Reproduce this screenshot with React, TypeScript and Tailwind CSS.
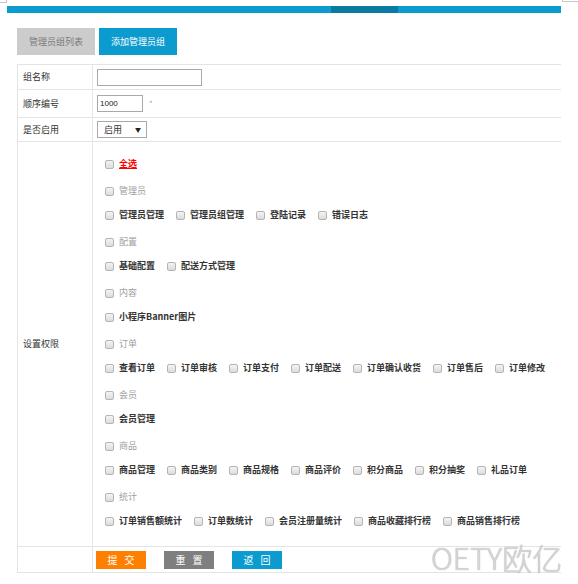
const groups = [
  { title: "管理员", items: ["管理员管理", "管理员组管理", "登陆记录", "错误日志"] },
  { title: "配置", items: ["基础配置", "配送方式管理"] },
  { title: "内容", items: ["小程序Banner图片"] },
  {
    title: "订单",
    items: ["查看订单", "订单审核", "订单支付", "订单配送", "订单确认收货", "订单售后", "订单修改"],
  },
  { title: "会员", items: ["会员管理"] },
  {
    title: "商品",
    items: ["商品管理", "商品类别", "商品规格", "商品评价", "积分商品", "积分抽奖", "礼品订单"],
  },
  {
    title: "统计",
    items: ["订单销售额统计", "订单数统计", "会员注册量统计", "商品收藏排行榜", "商品销售排行榜"],
  },
];

function Box() {
  return (
    <span className="w-[9px] h-[9px] shrink-0 rounded-[2px] border border-[#b4b4b4] bg-gradient-to-b from-[#f4f4f4] to-[#dcdcdc]" />
  );
}

function Check({ label, className }: { label: string; className?: string }) {
  return (
    <span className="flex items-center gap-[5px]">
      <Box />
      <span className={className}>{label}</span>
    </span>
  );
}

export default function App() {
  return (
    <div className="relative w-[578px] h-[584px] bg-white font-['Noto_Sans_CJK_SC',sans-serif] text-[9px] text-[#333]">
      {/* corner marks */}
      <div className="absolute left-0 top-0 w-[7px] h-[3px] border-r border-b border-[#c8c8c8]" />
      <div className="absolute right-0 top-0 w-[16px] h-[2px] border-l border-b border-[#c8c8c8]" />

      {/* top bar */}
      <div className="pt-[6px] pl-[7px]">
        <div className="flex w-[554px] h-[7px] bg-[#0b9bcf]">
          <div className="ml-[324px] w-[67px] bg-[#0a7aa2]" />
        </div>
      </div>

      <div className="pl-[17px]">
        {/* tabs */}
        <div className="mt-[15px] flex gap-[4px]">
          <div className="w-[78px] h-[27px] flex items-center justify-center bg-[#cccccc] text-[#7a7a7a]">
            管理员组列表
          </div>
          <div className="w-[78px] h-[27px] flex items-center justify-center bg-[#0b9bcf] text-white">
            添加管理员组
          </div>
        </div>

        {/* form table */}
        <div className="mt-[9px] w-[544px] border-l border-b border-[#e4e4e4]">
          <div className="flex h-[25px] border-t border-[#e4e4e4]">
            <div className="w-[75px] shrink-0 border-r border-[#e4e4e4] flex items-center pl-[5px]">组名称</div>
            <div className="flex items-center pl-[4px]">
              <span className="w-[105px] h-[17px] border border-[#a9a9a9] bg-white" />
            </div>
          </div>
          <div className="flex h-[28px] border-t border-[#e4e4e4]">
            <div className="w-[75px] shrink-0 border-r border-[#e4e4e4] flex items-center pl-[5px]">顺序编号</div>
            <div className="flex items-center pl-[4px] gap-[6px]">
              <span className="w-[46px] h-[17px] border border-[#a9a9a9] flex items-center pl-[2px] font-['Liberation_Sans',sans-serif] text-[8px] text-[#222]">
                1000
              </span>
              <span className="text-[#aaa] text-[8px]">*</span>
            </div>
          </div>
          <div className="flex h-[24px] border-t border-[#e4e4e4]">
            <div className="w-[75px] shrink-0 border-r border-[#e4e4e4] flex items-center pl-[5px]">是否启用</div>
            <div className="flex items-center pl-[4px]">
              <span className="w-[50px] h-[17px] border border-[#a9a9a9] flex items-center justify-between pl-[6px] pr-[5px]">
                <span>启用</span>
                <span className="text-[6px] text-[#222]">▼</span>
              </span>
            </div>
          </div>
          <div className="flex h-[405px] border-t border-[#e4e4e4]">
            <div className="w-[75px] shrink-0 border-r border-[#e4e4e4] flex items-center pl-[5px]">设置权限</div>
            <div className="flex flex-col gap-[3px] pl-[12px] pt-[10px]">
              <div className="h-[24px] flex items-center">
                <Check label="全选" className="text-[#ff0000] font-bold underline" />
              </div>
              {groups.map((g) => (
                <div key={g.title} className="flex flex-col">
                  <div className="h-[24px] flex items-center">
                    <Check label={g.title} className="text-[#a0a0a0]" />
                  </div>
                  <div className="h-[24px] flex items-center gap-[12px]">
                    {g.items.map((it) => (
                      <Check key={it} label={it} className="font-bold text-[#333]" />
                    ))}
                  </div>
                </div>
              ))}
            </div>
          </div>
          <div className="flex h-[26px] border-t border-[#e4e4e4]">
            <div className="w-[75px] shrink-0 border-r border-[#e4e4e4]" />
            <div className="flex items-center pl-[3px] gap-[18px] text-white text-[10px]">
              <span className="w-[50px] h-[18px] flex items-center justify-center bg-[#ff8000] tracking-[7px] pl-[7px]">提交</span>
              <span className="w-[50px] h-[18px] flex items-center justify-center bg-[#7f7f7f] tracking-[7px] pl-[7px]">重置</span>
              <span className="w-[50px] h-[18px] flex items-center justify-center bg-[#0b9bcf] tracking-[7px] pl-[7px]">返回</span>
            </div>
          </div>
        </div>
      </div>

      {/* watermark */}
      <div className="absolute left-[431px] top-[542px] text-[30px] leading-none font-light text-[#d6d6d6] [text-shadow:0_0_1px_#a0a0a0]">
        OETY欧亿
      </div>
    </div>
  );
}
